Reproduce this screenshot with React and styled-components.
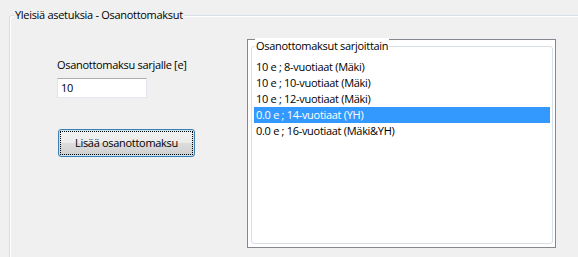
import React from "react";
import styled, { createGlobalStyle } from "styled-components";

const Global = createGlobalStyle`
  html, body { margin: 0; padding: 0; background: #f0f0f0; overflow: hidden; }
  body { font-family: "Open Sans", "Noto Sans", sans-serif; font-size: 11px; letter-spacing: -0.3px; color: #000; }
`;

const Page = styled.div`
  width: 578px;
  height: 257px;
  padding: 15px 0 0 9px;
  box-sizing: border-box;
  overflow: hidden;
`;

const GroupBox = styled.div`
  position: relative;
  box-sizing: border-box;
  border: 1px solid ${(p) => p.$line || "#d5dfe5"};
  border-radius: 3px;
  box-shadow: inset 1px 1px 0 #fff, 1px 1px 0 #fff;
  background: ${(p) => p.$bg || "transparent"};
`;

const Caption = styled.span`
  position: absolute;
  top: -9px;
  left: ${(p) => p.$left}px;
  padding: 0 1px;
  line-height: 16px;
  white-space: nowrap;
  background: ${(p) => p.$bg};
`;

const Outer = styled(GroupBox)`
  width: 620px;
  height: 280px;
  padding: 23px 0 0 47px;
  display: flex;
  align-items: flex-start;
`;

const LeftCol = styled.div`
  width: 190px;
  margin-top: 18px;
  display: flex;
  flex-direction: column;
  align-items: flex-start;
`;

const Label = styled.div`
  line-height: 16px;
  height: 16px;
  white-space: nowrap;
`;

const Input = styled.div`
  margin-top: 5px;
  width: 90px;
  height: 20px;
  box-sizing: border-box;
  border: 1px solid #abadb3;
  border-color: #abadb3 #e3e9ef #e3e9ef #e2e3ea;
  background: #fff;
  padding-left: 3px;
  line-height: 18px;
`;

const Button = styled.button`
  position: relative;
  margin-top: 31px;
  margin-left: 1px;
  width: 137px;
  height: 28px;
  box-sizing: border-box;
  border: 1px solid #3c7fb1;
  border-radius: 3px;
  box-shadow: inset 0 0 0 1px #c4e5f6;
  background: linear-gradient(#f2f2f2 0%, #ebebeb 50%, #dddddd 50%, #cfcfcf 100%);
  font: inherit;
  letter-spacing: inherit;
  color: #000;
  padding: 0;
  line-height: 24px;
  &::after {
    content: "";
    position: absolute;
    inset: 1px;
    border: 1px dotted #000;
  }
`;

const ListBox = styled.div`
  width: 309px;
  height: 209px;
  box-sizing: border-box;
  border: 1px solid #828790;
  background: #fff;
  padding: 6px 2px 3px 3px;
`;

const Inner = styled(GroupBox)`
  height: 100%;
  padding: 12px 2px 0 2px;
  border-color: #d5dfe5;
  box-shadow: inset 1px 1px 0 #fff;
`;

const Row = styled.div`
  height: 16px;
  line-height: 16px;
  padding-left: 2px;
  white-space: nowrap;
  background: ${(p) => (p.$selected ? "#3399ff" : "transparent")};
  color: ${(p) => (p.$selected ? "#fff" : "#000")};
`;

const items = [
  "10 e ; 8-vuotiaat (Mäki)",
  "10 e ; 10-vuotiaat (Mäki)",
  "10 e ; 12-vuotiaat (Mäki)",
  "0.0 e ; 14-vuotiaat (YH)",
  "0.0 e ; 16-vuotiaat (Mäki&YH)",
];

export default function App() {
  return (
    <>
      <Global />
      <Page>
        <Outer>
          <Caption $left={4} $bg="#f0f0f0">Yleisiä asetuksia - Osanottomaksut</Caption>
          <LeftCol>
            <Label>Osanottomaksu sarjalle [e]</Label>
            <Input>10</Input>
            <Button>Lisää osanottomaksu</Button>
          </LeftCol>
          <ListBox>
            <Inner>
              <Caption $left={3} $bg="#fff">Osanottomaksut sarjoittain</Caption>
              {items.map((t, i) => (
                <Row key={t} $selected={i === 3}>{t}</Row>
              ))}
            </Inner>
          </ListBox>
        </Outer>
      </Page>
    </>
  );
}
